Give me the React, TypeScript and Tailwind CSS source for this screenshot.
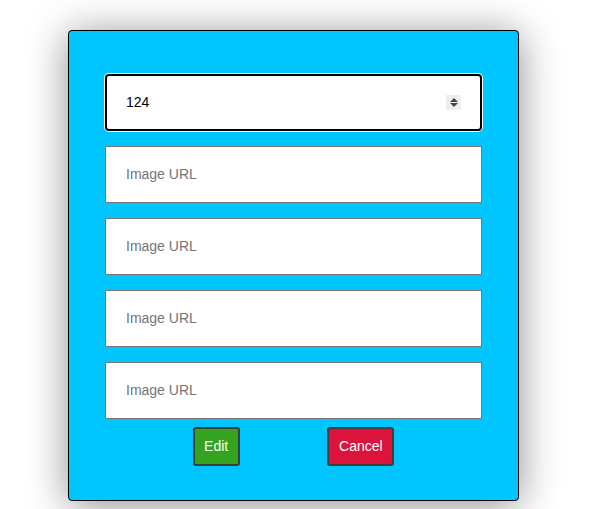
export default function App() {
  const fields = ['Image URL', 'Image URL', 'Image URL', 'Image URL']
  return (
    <div className="min-h-[509px] w-full bg-white pt-[30px] pl-[68px] font-['Liberation_Sans',Arial,sans-serif]">
      <div className="w-[451px] rounded-[4px] border border-black bg-[#00c5ff] px-[36px] pt-[43px] pb-[34px] shadow-[0_4px_40px_rgba(0,0,0,0.45)]">
        <div className="flex flex-col gap-[15px]">
          <div className="relative h-[57px] rounded-[4px] bg-white shadow-[0_0_0_1px_#ffffff]">
            <div className="flex h-full items-center rounded-[4px] border-2 border-black pl-[19px] pr-[19px] text-[14px] text-black">
              <span className="flex-1">124</span>
              <span className="flex h-[15px] w-[15px] flex-col items-center justify-center gap-[1px] bg-[#eeeeee]">
                <span className="h-0 w-0 border-x-[4px] border-b-[4px] border-x-transparent border-b-[#444]" />
                <span className="h-0 w-0 border-x-[4px] border-t-[4px] border-x-transparent border-t-[#444]" />
              </span>
            </div>
          </div>
          {fields.map((f, i) => (
            <div
              key={i}
              className="flex h-[57px] items-center border border-[#767676] bg-white pl-[20px] text-[14px] text-[#757575]"
            >
              {f}
            </div>
          ))}
        </div>
        <div className="mt-[8px] flex justify-evenly">
          <button className="h-[39px] w-[47px] rounded-[3px] border-2 border-[#3d3d3d] bg-[#33a320] text-[14px] text-white">
            Edit
          </button>
          <button className="h-[39px] w-[67px] rounded-[3px] border-2 border-[#3d3d3d] bg-[#dc143c] text-[14px] text-white">
            Cancel
          </button>
        </div>
      </div>
    </div>
  )
}
